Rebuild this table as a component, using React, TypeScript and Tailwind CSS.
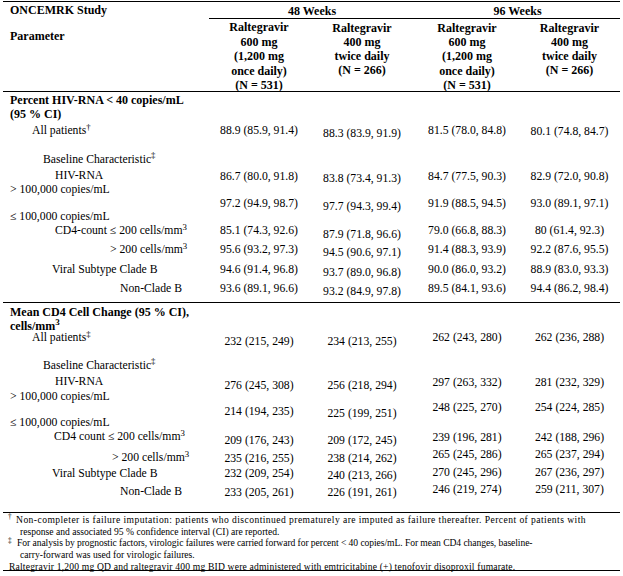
import type { ReactNode } from 'react'

interface Row {
  h: string
  lc: string
  label: ReactNode
  vals?: string[]
  vc?: string[]
}

const COLS = 'grid grid-cols-[206px_100px_106px_104px_101px]'

const pctRows: Row[] = [
  {
    h: 'h-[30px]',
    lc: 'pt-[0.5px] pl-[7px] font-bold text-[12px]',
    label: (
      <>
        Percent HIV-RNA &lt; 40 copies/mL
        <br />
        (95 % CI)
      </>
    ),
  },
  {
    h: 'h-[28px]',
    lc: 'pt-[2px] pl-[29px]',
    label: (
      <>
        All patients<sup>†</sup>
      </>
    ),
    vals: ['88.9 (85.9, 91.4)', '88.3 (83.9, 91.9)', '81.5 (78.0, 84.8)', '80.1 (74.8, 84.7)'],
    vc: ['pt-[2px]', 'pt-[4.5px]', 'pt-[2px]', 'pt-[2.5px]'],
  },
  {
    h: 'h-[18px]',
    lc: 'pt-[2.5px] pl-[40px]',
    label: (
      <>
        Baseline Characteristic<sup>‡</sup>
      </>
    ),
  },
  {
    h: 'h-[28px]',
    lc: 'pt-[0.5px]',
    label: (
      <>
        <div className="pl-[52px]">HIV-RNA</div>
        <div className="pl-[7px]">&gt; 100,000 copies/mL</div>
      </>
    ),
    vals: ['86.7 (80.0, 91.8)', '83.8 (73.4, 91.3)', '84.7 (77.5, 90.3)', '82.9 (72.0, 90.8)'],
    vc: ['pt-[1.5px]', 'pt-[3.5px]', 'pt-[1.5px]', 'pt-[1.5px]'],
  },
  {
    h: 'h-[28px]',
    lc: 'pt-[13.5px] pl-[7px]',
    label: <>≤ 100,000 copies/mL</>,
    vals: ['97.2 (94.9, 98.7)', '97.7 (94.3, 99.4)', '91.9 (88.5, 94.5)', '93.0 (89.1, 97.1)'],
    vc: ['pt-[0.5px]', 'pt-[3.5px]', 'pt-[0.5px]', 'pt-[0.5px]'],
  },
  {
    h: 'h-[18px]',
    lc: 'pl-[52px]',
    label: (
      <>
        CD4-count ≤ 200 cells/mm<sup>3</sup>
      </>
    ),
    vals: ['85.1 (74.3, 92.6)', '87.9 (71.8, 96.6)', '79.0 (66.8, 88.3)', '80 (61.4, 92.3)'],
    vc: ['pt-0', 'pt-[3.5px]', 'pt-0', 'pt-0'],
  },
  {
    h: 'h-[19px]',
    lc: 'pt-[1px] pl-[107px]',
    label: (
      <>
        &gt; 200 cells/mm<sup>3</sup>
      </>
    ),
    vals: ['95.6 (93.2, 97.3)', '94.5 (90.6, 97.1)', '91.4 (88.3, 93.9)', '92.2 (87.6, 95.5)'],
    vc: ['pt-[1px]', 'pt-[3.5px]', 'pt-[1px]', 'pt-[1px]'],
  },
  {
    h: 'h-[19px]',
    lc: 'pt-[2px] pl-[49px]',
    label: <>Viral Subtype Clade B</>,
    vals: ['94.6 (91.4, 96.8)', '93.7 (89.0, 96.8)', '90.0 (86.0, 93.2)', '88.9 (83.0, 93.3)'],
    vc: ['pt-[2px]', 'pt-[4.5px]', 'pt-[2px]', 'pt-[2px]'],
  },
  {
    h: 'h-[22px]',
    lc: 'pt-[1.5px] pl-[117px]',
    label: <>Non-Clade B</>,
    vals: ['93.6 (89.1, 96.6)', '93.2 (84.9, 97.8)', '89.5 (84.1, 93.6)', '94.4 (86.2, 98.4)'],
    vc: ['pt-[1.5px]', 'pt-[5px]', 'pt-[1.5px]', 'pt-[1.5px]'],
  },
]

const cd4Rows: Row[] = [
  {
    h: 'h-[28px]',
    lc: 'pt-[1.5px] pl-[7px] font-bold text-[12px]',
    label: (
      <>
        Mean CD4 Cell Change (95 % CI),
        <br />
        cells/mm<sup>3</sup>
      </>
    ),
  },
  {
    h: 'h-[21px]',
    lc: 'pl-[29px]',
    label: (
      <>
        All patients<sup>‡</sup>
      </>
    ),
    vals: ['232 (215, 249)', '234 (213, 255)', '262 (243, 280)', '262 (236, 288)'],
    vc: ['pt-[4px]', 'pt-[4px]', 'pt-0', 'pt-0'],
  },
  {
    h: 'h-[22px]',
    lc: 'pt-[6.5px] pl-[40px]',
    label: (
      <>
        Baseline Characteristic<sup>‡</sup>
      </>
    ),
  },
  {
    h: 'h-[26px]',
    lc: 'leading-[15px]',
    label: (
      <>
        <div className="pl-[52px]">HIV-RNA</div>
        <div className="pl-[7px]">&gt; 100,000 copies/mL</div>
      </>
    ),
    vals: ['276 (245, 308)', '256 (218, 294)', '297 (263, 332)', '281 (232, 329)'],
    vc: ['pt-[5px]', 'pt-[5px]', 'pt-[1.5px]', 'pt-[1.5px]'],
  },
  {
    h: 'h-[30px]',
    lc: 'pt-[15.5px] pl-[7px]',
    label: <>≤ 100,000 copies/mL</>,
    vals: ['214 (194, 235)', '225 (199, 251)', '248 (225, 270)', '254 (224, 285)'],
    vc: ['pt-[4.5px]', 'pt-[6.5px]', 'pt-[0.5px]', 'pt-[0.5px]'],
  },
  {
    h: 'h-[17px]',
    lc: 'pl-[51px]',
    label: (
      <>
        CD4 count ≤ 200 cells/mm<sup>3</sup>
      </>
    ),
    vals: ['209 (176, 243)', '209 (172, 245)', '239 (196, 281)', '242 (188, 296)'],
    vc: ['pt-[3.5px]', 'pt-[4px]', 'pt-[0.5px]', 'pt-[0.5px]'],
  },
  {
    h: 'h-[19px]',
    lc: 'pt-[4px] pl-[109px]',
    label: (
      <>
        &gt; 200 cells/mm<sup>3</sup>
      </>
    ),
    vals: ['235 (216, 255)', '238 (214, 262)', '265 (245, 286)', '265 (237, 294)'],
    vc: ['pt-[4.5px]', 'pt-[4.5px]', 'pt-[0.5px]', 'pt-[0.5px]'],
  },
  {
    h: 'h-[17px]',
    lc: 'pt-[1px] pl-[49px]',
    label: <>Viral Subtype Clade B</>,
    vals: ['232 (209, 254)', '240 (213, 266)', '270 (245, 296)', '267 (236, 297)'],
    vc: ['pt-[1px]', 'pt-[2.5px]', 'pt-0', 'pt-0'],
  },
  {
    h: 'h-[29px]',
    lc: 'pt-[2px] pl-[117px]',
    label: <>Non-Clade B</>,
    vals: ['233 (205, 261)', '226 (191, 261)', '246 (219, 274)', '259 (211, 307)'],
    vc: ['pt-[2.5px]', 'pt-[2.5px]', 'pt-0', 'pt-0'],
  },
]

function DataRow({ row }: { row: Row }) {
  return (
    <div className={`${COLS} ${row.h}`}>
      <div className={`whitespace-nowrap ${row.lc}`}>{row.label}</div>
      {(row.vals ?? ['', '', '', '']).map((v, i) => (
        <div key={i} className={`text-center whitespace-nowrap ${row.vc?.[i] ?? ''}`}>
          {v}
        </div>
      ))}
    </div>
  )
}

function Header() {
  return (
    <div className={`${COLS} border-y border-black font-bold text-[12px]`}>
      <div className="h-[17px] pt-[0.5px] pl-[7px]">ONCEMRK Study</div>
      <div className="col-span-2 h-[17px] pt-[2px] text-center border-b border-black">48 Weeks</div>
      <div className="col-span-2 h-[17px] pt-[2px] text-center border-b border-black">96 Weeks</div>

      <div className="h-[72px] pt-[10px] pl-[7px]">Parameter</div>
      <div className="h-[72px] pt-[1px] text-center leading-[14.5px]">
        Raltegravir
        <br />
        600 mg
        <br />
        (1,200 mg
        <br />
        once daily)
        <br />
        (N = 531)
      </div>
      <div className="h-[72px] pt-[2px] text-center">
        Raltegravir
        <br />
        400 mg
        <br />
        twice daily
        <br />
        (N = 266)
      </div>
      <div className="h-[72px] pt-[2px] text-center leading-[14.2px]">
        Raltegravir
        <br />
        600 mg
        <br />
        (1,200 mg
        <br />
        once daily)
        <br />
        (N = 531)
      </div>
      <div className="h-[72px] pt-[2px] text-center">
        Raltegravir
        <br />
        400 mg
        <br />
        twice daily
        <br />
        (N = 266)
      </div>
    </div>
  )
}

function Footnotes() {
  return (
    <div className="h-[59px] pt-[1px] border-y border-black text-[9.6px] leading-[11.7px] whitespace-nowrap">
      <div className="pl-[5px] tracking-[0.43px]">
        <sup className="mr-[4px]">†</sup>Non-completer is failure imputation: patients who discontinued prematurely are
        imputed as failure thereafter. Percent of patients with
      </div>
      <div className="pl-[17px]">response and associated 95 % confidence interval (CI) are reported.</div>
      <div className="pl-[5px] tracking-[-0.07px]">
        <sup className="mr-[5.5px]">‡</sup>For analysis by prognostic factors, virologic failures were carried forward
        for percent &lt; 40 copies/mL. For mean CD4 changes, baseline-
      </div>
      <div className="pl-[17px]">carry-forward was used for virologic failures.</div>
      <div className="pl-[6px] tracking-[0.18px]">
        Raltegravir 1,200 mg QD and raltegravir 400 mg BID were administered with emtricitabine (+) tenofovir
        disoproxil fumarate.
      </div>
    </div>
  )
}

export default function App() {
  return (
    <div className="w-[623px] h-[576px] overflow-hidden bg-white text-black font-['Liberation_Serif',serif] text-[11.7px] leading-[14px]">
      <div className="ml-[3px] w-[617px] pt-[1px]">
        <Header />
        <div>
          {pctRows.map((r, i) => (
            <DataRow key={i} row={r} />
          ))}
        </div>
        <div className="border-t border-black">
          {cd4Rows.map((r, i) => (
            <DataRow key={i} row={r} />
          ))}
        </div>
        <Footnotes />
      </div>
    </div>
  )
}
